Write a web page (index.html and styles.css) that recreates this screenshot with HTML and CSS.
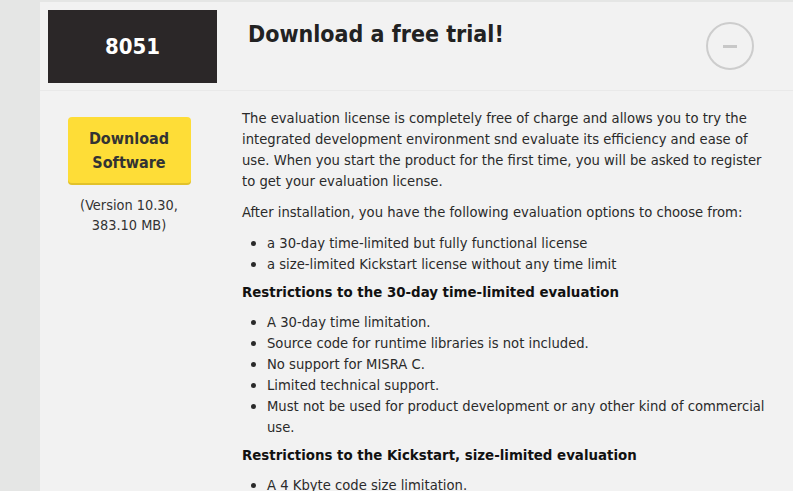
FILE: index.html
```html
<!DOCTYPE html>
<html lang="en">
<head>
<meta charset="utf-8">
<link rel="stylesheet" href="styles.css">
</head>
<body>
<div class="page">
  <div class="panel">
    <div class="header">
      <div class="badge">8051</div>
      <h2 class="title">Download a free trial!</h2>
      <div class="toggle"><span class="minus"></span></div>
    </div>
    <div class="content">
      <div class="side">
        <a class="btn">Download<br>Software</a>
        <div class="version">(Version 10.30,<br>383.10 MB)</div>
      </div>
      <div class="main">
        <p>The evaluation license is completely free of charge and allows you to try the integrated development environment snd evaluate its efficiency and ease of use. When you start the product for the first time, you will be asked to register to get your evaluation license.</p>
        <p>After installation, you have the following evaluation options to choose from:</p>
        <ul>
          <li>a 30-day time-limited but fully functional license</li>
          <li>a size-limited Kickstart license without any time limit</li>
        </ul>
        <h4>Restrictions to the 30-day time-limited evaluation</h4>
        <ul>
          <li>A 30-day time limitation.</li>
          <li>Source code for runtime libraries is not included.</li>
          <li>No support for MISRA C.</li>
          <li>Limited technical support.</li>
          <li>Must not be used for product development or any other kind of commercial use.</li>
        </ul>
        <h4>Restrictions to the Kickstart, size-limited evaluation</h4>
        <ul>
          <li>A 4 Kbyte code size limitation.</li>
        </ul>
      </div>
    </div>
  </div>
</div>
</body>
</html>
```

FILE: styles.css
```css
html, body {
  margin: 0;
  padding: 0;
  background: #e5e6e5;
  overflow: hidden;
  height: 491px;
}
.page {
  padding: 2px 0 0 40px;
  height: 489px;
  overflow: hidden;
}
.panel {
  background: #f2f2f2;
  min-height: 489px;
}
.header {
  display: flex;
  align-items: flex-start;
  padding: 8px 0 0 8px;
  height: 80px;
  border-bottom: 1px solid #e9e9e9;
}
.badge {
  width: 169px;
  height: 73px;
  background: #2b2728;
  color: #fff;
  font-family: "DejaVu Sans Condensed", "DejaVu Sans", sans-serif;
  font-weight: bold;
  font-size: 22px;
  display: flex;
  align-items: center;
  justify-content: center;
}
.title {
  margin: 8px 0 0 31px;
  font-family: "DejaVu Sans Condensed", "DejaVu Sans", sans-serif;
  font-weight: bold;
  font-size: 23px;
  line-height: 32px;
  color: #222;
  flex: 1;
}
.toggle {
  width: 44px;
  height: 44px;
  border: 2px solid #cdcdcd;
  border-radius: 50%;
  margin: 12px 39px 0 0;
  display: flex;
  align-items: center;
  justify-content: center;
}
.minus {
  width: 14px;
  height: 3px;
  background: #c8c8c8;
}
.content {
  display: flex;
  padding-top: 16px;
}
.side {
  width: 178px;
  display: flex;
  flex-direction: column;
  align-items: center;
  padding-top: 10px;
}
.btn {
  display: block;
  width: 123px;
  box-sizing: border-box;
  padding: 10px 0 8px;
  background: #fedd37;
  border-radius: 4px;
  box-shadow: 0 2px 0 #e2c22a;
  text-align: center;
  font-family: "DejaVu Sans Condensed", "DejaVu Sans", sans-serif;
  font-weight: bold;
  font-size: 16px;
  line-height: 24px;
  color: #333;
}
.version {
  margin-top: 12px;
  text-align: center;
  font-family: "DejaVu Sans Condensed", "DejaVu Sans", sans-serif;
  font-size: 14.4px;
  line-height: 20px;
  color: #333;
}
.main {
  margin-left: 24px;
  width: 527px;
  font-family: "DejaVu Sans Condensed", "DejaVu Sans", sans-serif;
  font-size: 14.65px;
  line-height: 21px;
  color: #2a2a2a;
}
.main p {
  margin: 0 0 10px;
}
.main ul {
  margin: 0 0 8px;
  padding-left: 25px;
}
.main h4 {
  margin: 0 0 8px;
  font-size: 14.86px;
  line-height: 21px;
  font-weight: bold;
  color: #111;
}
```
